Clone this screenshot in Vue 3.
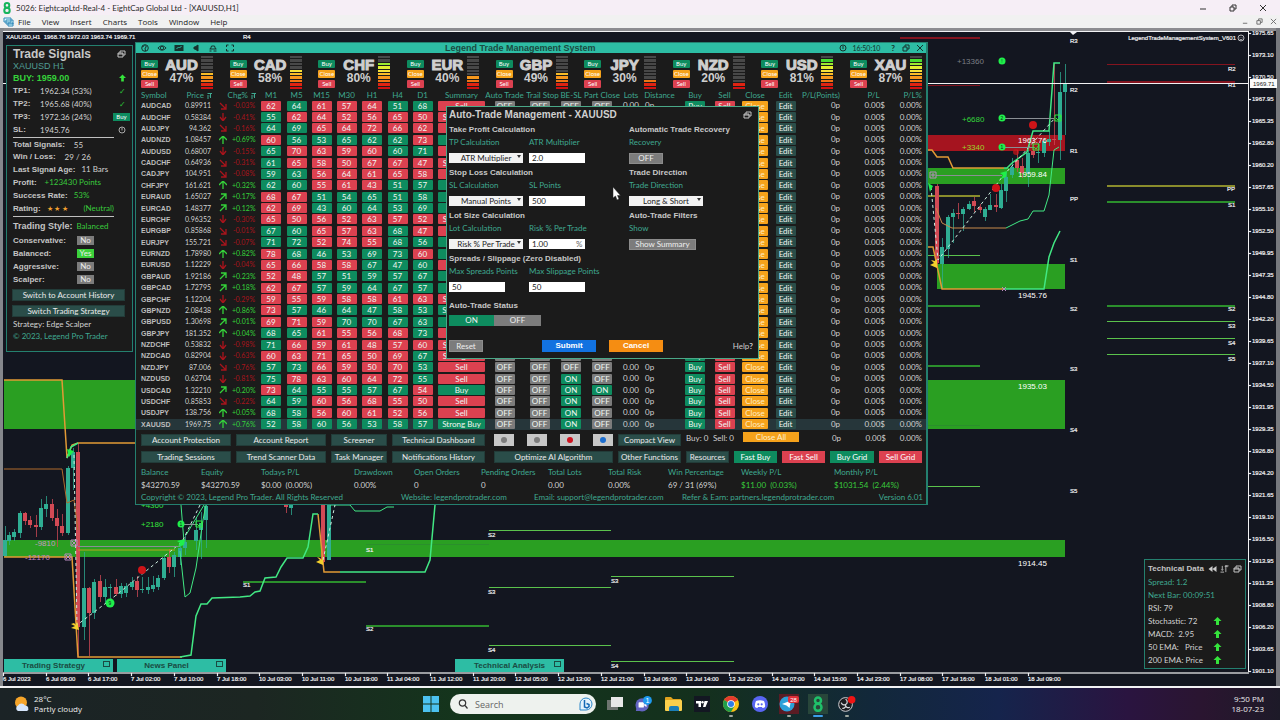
<script setup>
import { ref } from 'vue'

const menus = ['File', 'View', 'Insert', 'Charts', 'Tools', 'Window', 'Help']

const prices = ['1975.65', '1973.10', '1970.50', '1967.95', '1965.35', '1962.80', '1960.20', '1957.65', '1955.10', '1952.50',
  '1949.95', '1947.35', '1944.80', '1942.20', '1939.65', '1937.10', '1934.50', '1931.95', '1929.35', '1926.80',
  '1924.20', '1921.65', '1919.10', '1916.50', '1913.95', '1911.35', '1908.80', '1906.20', '1903.65', '1901.10']

const times = ['6 Jul 2023', '6 Jul 09:00', '6 Jul 17:00', '7 Jul 02:00', '7 Jul 10:00', '7 Jul 18:00', '10 Jul 03:00', '10 Jul 11:00',
  '10 Jul 19:00', '11 Jul 04:00', '11 Jul 12:00', '11 Jul 20:00', '12 Jul 05:00', '12 Jul 13:00', '12 Jul 21:00', '13 Jul 06:00',
  '13 Jul 14:00', '13 Jul 22:00', '14 Jul 07:00', '14 Jul 15:00', '14 Jul 23:00', '17 Jul 08:00', '17 Jul 16:00', '18 Jul 01:00', '18 Jul 09:00']

const zones = [
  { x: 4, y: 380, w: 132, h: 49, c: 'zg' }, { x: 4, y: 540, w: 1061, h: 17, c: 'zg' },
  { x: 928, y: 135, w: 137, h: 16, c: 'zr' }, { x: 928, y: 168, w: 137, h: 16, c: 'zg' },
  { x: 937, y: 264, w: 128, h: 25, c: 'zg' }, { x: 928, y: 380, w: 137, h: 49, c: 'zg' }
]

const levels = [
  [900, 980, 37, 'lr', 2], [900, 980, 85, 'lr', 1], [900, 980, 195, 'lo', 2], [900, 980, 255, 'll', 1], [900, 980, 305, 'lg', 2],
  [900, 980, 365, 'lg', 2], [900, 980, 486, 'll', 1], [900, 980, 425, 'lg', 1],
  [1107, 1235, 64, 'lr', 1], [1107, 1235, 81, 'lr', 2], [1107, 1235, 185, 'lo', 2], [1107, 1235, 201, 'lg', 2], [1107, 1235, 305, 'lg', 2],
  [1107, 1235, 321, 'll', 1], [1107, 1235, 338, 'll', 1], [1107, 1235, 354, 'll', 1],
  [243, 366, 581, 'lg', 2], [366, 489, 625, 'lg', 2], [366, 489, 544, 'lg', 1],
  [489, 611, 530, 'll', 1], [489, 611, 587, 'll', 1], [489, 611, 645, 'll', 1], [611, 734, 576, 'll', 1], [611, 734, 661, 'll', 1]
]

const marks = [
  ['R4', 243, 39], ['R3', 1070, 43], ['R2', 1070, 92], ['R1', 1070, 153], ['PP', 1070, 201], ['S1', 1070, 262], ['S2', 1070, 311],
  ['S3', 1070, 371], ['S4', 1070, 432], ['S5', 1070, 493],
  ['R2', 1228, 71], ['R1', 1228, 87], ['PP', 1227, 191], ['S1', 1228, 207], ['S2', 1228, 311], ['S3', 1228, 328], ['S4', 1228, 345], ['S5', 1228, 361],
  ['S1', 243, 587], ['S1', 366, 552], ['S2', 366, 631], ['S2', 488, 537], ['S3', 488, 594], ['S4', 488, 652], ['S3', 611, 583], ['S4', 611, 668]
]

// x, body top, body bottom, wick top, wick bottom, rising
const candles = [
  [5, 540, 556, 526, 557, 1], [9, 535, 541, 532, 545, 1], [14, 532, 537, 529, 541, 1], [20, 513, 533, 511, 538, 1], [25, 513, 521, 512, 525, 0],
  [30, 520, 525, 516, 528, 0], [36, 525, 527, 515, 537, 0], [41, 508, 527, 499, 530, 1], [46, 504, 509, 496, 517, 1], [52, 504, 518, 499, 521, 0],
  [57, 518, 526, 509, 547, 0], [62, 526, 533, 514, 536, 0], [68, 468, 533, 466, 535, 1], [73, 452, 468, 448, 490, 1], [78, 452, 627, 443, 657, 0],
  [84, 588, 627, 552, 640, 1], [89, 588, 613, 587, 656, 0], [94, 582, 613, 579, 619, 1], [100, 581, 597, 575, 602, 0], [105, 587, 597, 579, 604, 1],
  [110, 587, 588, 584, 599, 1], [116, 587, 594, 579, 596, 0], [121, 586, 594, 583, 598, 1], [126, 586, 593, 583, 597, 1], [132, 582, 587, 577, 590, 1],
  [137, 581, 590, 576, 597, 0], [142, 589, 590, 577, 593, 1], [148, 587, 590, 577, 594, 1], [153, 585, 589, 576, 592, 1], [158, 578, 587, 575, 590, 1],
  [164, 558, 578, 555, 580, 1], [169, 557, 567, 549, 573, 0], [174, 555, 567, 552, 577, 1], [180, 548, 557, 540, 565, 1], [185, 542, 548, 534, 555, 1],
  [196, 530, 541, 517, 550, 1], [201, 523, 530, 512, 559, 1], [206, 506, 520, 500, 548, 1],
  [286, 505, 507, 500, 513, 0], [291, 505, 508, 500, 515, 1], [323, 490, 562, 480, 566, 0], [329, 490, 560, 480, 560, 1],
  [937, 186, 263, 184, 265, 0], [942, 247, 264, 238, 289, 1], [948, 217, 249, 215, 258, 1], [953, 213, 217, 209, 243, 1], [958, 213, 214, 203, 219, 0],
  [963, 209, 214, 207, 231, 1], [969, 204, 209, 201, 210, 1], [974, 201, 206, 197, 212, 0], [980, 207, 210, 204, 213, 0], [985, 209, 217, 207, 221, 1],
  [990, 205, 210, 194, 210, 1], [996, 205, 207, 194, 212, 0], [1001, 190, 208, 184, 209, 1], [1006, 177, 191, 172, 202, 1], [1012, 167, 175, 158, 178, 1],
  [1017, 160, 168, 150, 172, 0], [1022, 166, 173, 158, 178, 0], [1028, 153, 173, 150, 187, 1], [1033, 151, 155, 137, 158, 0], [1038, 152, 153, 143, 163, 1],
  [1044, 141, 153, 138, 157, 1], [1049, 139, 142, 131, 146, 1], [1054, 139, 140, 63, 145, 0], [1060, 92, 140, 72, 160, 1], [1065, 83, 92, 64, 135, 1]
]

const currencies = [['AUD', 47, 5], ['CAD', 58, 6], ['CHF', 80, 8], ['EUR', 40, 4], ['GBP', 49, 5], ['JPY', 30, 3], ['NZD', 20, 2], ['USD', 81, 9], ['XAU', 87, 9]]

const heads = ['Symbol', 'Price', '', 'Chg%', 'M1', 'M5', 'M15', 'M30', 'H1', 'H4', 'D1', 'Summary', 'Auto Trade', 'Trail Stop', 'BE-SL',
  'Part Close', 'Lots', 'Distance', 'Buy', 'Sell', 'Close', 'Edit', 'P/L(Points)', 'P/L', 'P/L%']

const raw = `AUDCAD 0.89911 d -0.03 62r 64g 61r 57r 64r 51g 68g Sell 0000
AUDCHF 0.58384 D -0.41 55g 62r 64r 52r 56r 65r 50r Strong_Sell 0000
AUDJPY 94.362 d -0.16 64g 69g 65r 64r 72r 66r 62r Sell 0000
AUDNZD 1.08457 U +0.69 60r 56g 53g 65g 62g 62g 73r Buy 0000
AUDUSD 0.68007 D -0.15 65g 70r 63r 59r 60r 60g 71g Sell 0000
CADCHF 0.64936 d -0.31 61g 65r 58r 50r 67r 67r 47r Strong_Sell 0000
CADJPY 104.951 d -0.08 59g 63g 56r 64r 61r 65r 58r Sell 0000
CHFJPY 161.621 U +0.32 62g 60g 55r 61r 43r 51g 57g Buy 0000
EURAUD 1.65027 u +0.17 68r 67r 51g 54g 65g 51g 58g Buy 0000
EURCAD 1.48377 u +0.12 62r 69r 43g 60g 64g 53g 69g Buy 0000
EURCHF 0.96352 D -0.30 65r 50r 56r 52r 63r 57r 52r Strong_Sell 0000
EURGBP 0.85868 d -0.01 67g 60g 65r 57r 63r 68g 47r Sell 0000
EURJPY 155.721 d -0.07 71g 72g 52r 74r 55r 68g 56g Buy 0000
EURNZD 1.78980 U +0.82 78r 68g 46g 53g 69g 73g 60r Buy 0000
EURUSD 1.12229 D -0.04 65r 66r 58r 58r 67g 47g 60g Sell 0000
GBPAUD 1.92186 u +0.23 52r 48r 57g 51g 59g 57g 67g Buy 0000
GBPCAD 1.72795 u +0.18 62r 67r 57g 59g 64g 67g 57g Buy 0000
GBPCHF 1.12204 D -0.29 59r 55r 59r 58r 58r 61r 63r Strong_Sell 0000
GBPNZD 2.08438 U +0.86 73r 57g 46g 64g 47g 58g 53g Strong_Buy 0000
GBPUSD 1.30698 u +0.01 69r 71r 59r 70g 70g 67g 63g Buy 0000
GBPJPY 181.352 U +0.04 68g 65g 61r 55r 56r 68r 73g Sell 0000
NZDCHF 0.53832 D -0.98 71g 66r 59r 61r 48r 57r 60r Strong_Sell 0000
NZDCAD 0.82904 D -0.63 60r 63r 71r 65r 50r 69r 67g Strong_Sell 0000
NZDJPY 87.006 d -0.76 57g 73g 66r 59r 50r 70r 53g Sell 0000
NZDUSD 0.62704 D -0.81 75g 78r 63r 60r 64r 72r 55g Sell 0010
USDCAD 1.32210 u +0.20 73r 64g 55g 55g 57g 67g 54r Buy 0011
USDCHF 0.85853 d -0.22 64g 59g 60r 56r 68r 55r 50r Sell 0010
USDJPY 138.756 U +0.05 68g 58g 56r 60r 61r 52r 56r Sell 0010
XAUUSD 1969.75 U +0.76 52g 58g 60g 56g 53g 58g 57g Strong_Buy 0010`

const rows = raw.split('\n').map(line => {
  const p = line.split(' ')
  return {
    sym: p[0], price: p[1], dir: p[2], chg: p[3] + '%',
    tf: p.slice(4, 11).map(v => ({ n: v.slice(0, 2), c: v[2] })),
    sum: p[11].replace('_', ' '), tog: [...p[12]].map(Number)
  }
})
const arrows = {
  d: 'M1 1L7 7M7 2V7H2', D: 'M4 0V8M1 4L4 8L7 4', U: 'M4 8V0M0 4L4 0L8 4', u: 'M1 7L7 1M2 1H7V6'
}

const targets = [['TP1:', '1962.34 (53%)', '✓'], ['TP2:', '1965.68 (40%)', '✓'], ['TP3:', '1972.36 (24%)', 'Buy'], ['SL:', '1945.76', 'clock']]
const stats = [
  ['Balance', '$43270.59'], ['Equity', '$43270.59'], ['Todays P/L', '$0.00  (0.00%)'], ['Drawdown', '0.00%'], ['Open Orders', '0'],
  ['Pending Orders', '0'], ['Total Lots', '0.00'], ['Total Risk', '0.00%'], ['Win Percentage', '69 / 31 (69%)'], ['Weekly P/L', '$11.00  (0.03%)'], ['Monthly P/L', '$1031.54  (2.44%)']
]
const styles = [['Conservative:', 'No'], ['Balanced:', 'Yes'], ['Aggressive:', 'No'], ['Scalper:', 'No']]

const tpCalc = ref('ATR Multiplier')
const slCalc = ref('Manual Points')
const lotCalc = ref('Risk % Per Trade')
const direction = ref('Long & Short')
const atr = ref('2.0')
const slPts = ref('500')
const risk = ref('1.00')
const spread = ref('50')
const slip = ref('50')
</script>

<template>
  <div class="app">
    <header class="titlebar">
      <svg class="logo8" viewBox="0 0 10 12"><circle cx="5" cy="3.4" r="2.3" /><circle cx="5" cy="8.4" r="2.7" /></svg>
      <h1>5026: EightcapLtd-Real-4 - EightCap Global Ltd - [XAUUSD,H1]</h1>
      <div class="wctl">
        <button aria-label="Minimize"><svg viewBox="0 0 8 8"><path d="M1 5H7" /></svg></button>
        <button aria-label="Restore"><svg viewBox="0 0 8 8"><path d="M1 3H5V7H1ZM3 3V1H7V5H5" /></svg></button>
        <button aria-label="Close"><svg viewBox="0 0 8 8"><path d="M1 1L7 7M7 1L1 7" /></svg></button>
      </div>
    </header>
    <nav class="menubar">
      <svg class="mdi" viewBox="0 0 11 10"><path d="M1 1H8V5H1ZM3 3H10V7H3ZM5 6H10V9H5Z" /></svg>
      <button v-for="m in menus" :key="m">{{ m }}</button>
      <div class="wctl small">
        <button aria-label="Minimize chart"><svg viewBox="0 0 8 8"><path d="M1 6H6" /></svg></button>
        <button aria-label="Restore chart"><svg viewBox="0 0 8 8"><path d="M1 3H5V7H1ZM3 3V1H7V5H5" /></svg></button>
        <button aria-label="Close chart"><svg viewBox="0 0 8 8"><path d="M1 1L7 7M7 1L1 7" /></svg></button>
      </div>
    </nav>

    <main class="desk">
      <svg class="chart" viewBox="0 28 1280 660" preserveAspectRatio="xMinYMin meet">
        <rect x="0" y="28" width="1280" height="3" fill="#8c8c90" />
        <rect x="0" y="28" width="4" height="660" fill="#85878c" />
        <rect x="1276" y="28" width="4" height="660" fill="#77797e" />
        <rect x="3" y="31" width="1273" height="655" fill="#131620" />
        <rect v-for="(z, i) in zones" :key="'z' + i" :x="z.x" :y="z.y" :width="z.w" :height="z.h" :class="z.c" />
        <rect v-for="(l, i) in levels" :key="'l' + i" :x="l[0]" :y="l[2]" :width="l[1] - l[0]" :height="l[4]" :class="l[3]" />
        <g v-for="(c, i) in candles" :key="'c' + i" :class="c[5] ? 'up' : 'dn'">
          <rect :x="c[0]" :y="c[3]" width="1" :height="c[4] - c[3]" opacity=".75" />
          <rect :x="c[0] - 2" :y="c[1]" width="4" :height="c[2] - c[1]" />
        </g>
        <g fill="none" stroke="#e29a35" stroke-width="1.5">
          <path d="M4 380H62L67 458L72 445L78 443H136" />
          <path d="M4 469H62L67 503L74 500L78 530" stroke-width="1" stroke="#b06a2c" />
          <path d="M4 557H72L78 657H182" />
          <path d="M78 550H175" stroke="#b8a51e" stroke-width="1" />
          <path d="M318 514L324 572H340" />
          <path d="M928 150H932L937 157H948L953 168H1004" />
          <path d="M936 208L942 223L952 228H1006" stroke-width="1" stroke="#c98a4a" />
          <path d="M928 247H933L942 289H1004" />
        </g>
        <g fill="none" stroke="#42e884" stroke-width="1.5">
          <path d="M180 657L191 655L196 616L201 604H207L212 598L240 597L250 596L255 592L260 591L265 578L276 577L281 567L287 558H303L308 547L313 514H318" />
          <path d="M340 572H425L430 560L435 505" />
          <path d="M180 551L185 597L190 593L196 568L203 520L206 505M184 542L181 505M186 535L204 505" stroke-width="1" />
          <path d="M330 505H350L355 511H380L387 507H394" stroke-width="1" />
          <path d="M67 458L71 447L78 443" />
          <path d="M1004 168H1007L1012 163L1027 152L1033 131H1049L1054 63H1060" />
          <path d="M1006 228L1020 221L1028 219L1033 211H1044L1049 195L1054 150L1059 147" stroke-width="1" />
          <path d="M1004 289H1044L1049 257L1054 243L1060 231" />
        </g>
        <g fill="none" stroke="#cdeee0" stroke-width="1" stroke-dasharray="3 3">
          <path d="M74 455L77 625L110 600L182 542L200 505M323 560L335 505M931 187L938 260L1003 176L1055 118" />
        </g>
        <g stroke="#8a8f94" stroke-width="1"><path d="M1005 118.500H1054M1005 147.500H1035M936 175.500H1002M78 546.500H180M184 524.500H198" /></g>
        <g fill="#f4d02c">
          <path d="M79 630L71 628L75 626L71 624L74 623L76 625L77 621Z" /><path d="M323 565L316 562L320 560L317 557L320 558L322 560L323 556Z" />
          <path d="M937 268L930 265L934 263L931 260L935 261L937 259Z" />
        </g>
        <g fill="#1ff04a">
          <path d="M67 449L74 451L69 457Z" /><path d="M185 539L177 541L180 543L178 547L184 545Z" /><path d="M1007 171L1000 173L1003 175L1001 179L1006 177Z" /><path d="M928 183L933 186L930 192Z" />
          <circle cx="1002" cy="61" r="3.500" /><circle cx="1002" cy="118" r="3.500" /><circle cx="1002" cy="147" r="3.500" />
          <circle cx="181" cy="524" r="3.500" /><circle cx="110" cy="603" r="4.500" />
        </g>
        <g fill="#131620" font-size="5" text-anchor="middle" class="ar">
          <text x="1002" y="63">!</text><text x="1002" y="120">2</text><text x="1002" y="149">1</text><text x="181" y="526">1</text><text x="110" y="605">9</text>
        </g>
        <g fill="#cf1418"><circle cx="142" cy="570" r="4" /><circle cx="1033" cy="125" r="4" /><circle cx="996" cy="188" r="4" /><circle cx="1016" cy="152" r="3" opacity=".7" /></g>
        <g fill="none" stroke="#2cf03c"><path d="M1055 115H1061V121H1055ZM1056 118L1058 120L1061 116M1033 144H1039V150H1033ZM1034 147L1036 149L1039 145M196 521H202V527H196ZM197 524L199 526L202 522" /></g>
        <g fill="none" stroke="#b98ac0"><path d="M71 540H77V546H71ZM72 541L76 545M76 541L72 545M65 554H71V560H65ZM66 555L70 559M70 555L66 559M930 172H936V178H930ZM932 174H934V176H932ZM1002 287L1006 291M1006 287L1002 291" /></g>
        <g class="ar" font-size="8">
          <text x="957" y="64" fill="#7b7e84">+13360</text><text x="962" y="122" fill="#35d43c">+6680</text><text x="962" y="150" fill="#9ad42c">+3340</text>
          <text x="141" y="527" fill="#35e43c">+2180</text><text x="141" y="508" fill="#35e43c">+4360</text>
          <text x="35" y="546" fill="#c49ac0">-9810</text><text x="25" y="560" fill="#c884c0">-12170</text>
          <g fill="#ffffff"><text x="1018" y="143">1963.76</text><text x="1018" y="177">1959.84</text><text x="1018" y="298">1945.76</text><text x="1018" y="389">1935.03</text><text x="1018" y="566">1914.45</text></g>
        </g>
        <g class="ar axis" font-size="6"><text v-for="(m, i) in marks" :key="'m' + i" :x="m[1]" :y="m[2]">{{ m[0] }}</text></g>
        <g fill="#f2f2f4">
          <rect x="3" y="31" width="1245" height="1" /><rect x="1248" y="31" width="1" height="642" /><rect x="928" y="83" width="320" height="1" />
          <rect x="3" y="83" width="4" height="1" /><path d="M1070 32H1077L1073 35Z" />
          <rect x="0" y="686" width="1280" height="2" />
        </g>
        <rect x="3" y="672" width="1246" height="2" fill="#9a9ca0" />
        <g class="ar axis" font-size="6">
          <text x="6" y="39">XAUUSD,H1&nbsp; 1968.76 1972.03 1963.74 1969.71</text>
          <g v-for="(p, i) in prices" :key="p"><text x="1252" :y="35 + i * 22">{{ p }}</text><rect x="1249" :y="33 + i * 22" width="2" height="1" /></g>
          <g v-for="(t, i) in times" :key="t"><text :x="3 + Math.round(i * 42.7)" y="681">{{ t }}</text><rect :x="3 + Math.round(i * 42.7)" y="673" width="1" height="3" /></g>
          <text x="1236" y="40" text-anchor="end">LegendTradeManagementSystem_V601</text>
        </g>
        <g fill="none" stroke="#dcdce0" stroke-width=".8"><circle cx="1241" cy="38" r="3" /><path d="M1239.500 39Q1241 41 1242.500 39M1240 37V37.500M1242 37V37.500" /></g>
        <rect x="1250" y="79" width="27" height="9" fill="#fafafa" /><text class="ar" x="1253" y="86" font-size="6" fill="#222">1969.71</text>
      </svg>

      <section class="panel signals">
        <div class="hd"><h2>Trade Signals</h2><button aria-label="Restore" class="ic"><svg viewBox="0 0 9 8"><path d="M1 3H6V7H1ZM3 3V1H8V5H6M1 4H6" /></svg></button></div>
        <div class="sym">XAUUSD H1</div>
        <div class="buy"><span>BUY: 1959.00</span><svg viewBox="0 0 8 8"><path d="M4 0L8 4H5.500V8H2.500V4H0Z" /></svg></div>
        <div v-for="t in targets" :key="t[0]" class="tp">
          <b>{{ t[0] }}</b><span>{{ t[1] }}</span>
          <button v-if="t[2] === 'Buy'" class="mini g">Buy</button>
          <svg v-else-if="t[2] === 'clock'" class="clk" viewBox="0 0 8 8"><circle cx="4" cy="4" r="3" /><path d="M4 1.500V4.500" /></svg>
          <i v-else>{{ t[2] }}</i>
        </div>
        <hr>
        <div class="ln a"><b>Total Signals:</b><span class="x3">55</span></div>
        <div class="ln a"><b>Win / Loss:</b><span class="x3">29 / 26</span></div>
        <div class="ln"><b>Last Signal Age:</b><span>11 Bars</span></div>
        <div class="ln"><b>Profit:</b><span class="gr x2">+123430 Points</span></div>
        <div class="ln"><b>Success Rate:</b><span class="gr">53%</span></div>
        <div class="ln"><b>Rating:</b><span class="st">★ ★ ★</span><span class="gr neu">(Neutral)</span></div>
        <hr>
        <div class="ln big"><b>Trading Style:</b><span class="gr">Balanced</span></div>
        <div v-for="s in styles" :key="s[0]" class="ln sty"><b>{{ s[0] }}</b><button :class="{ yes: s[1] === 'Yes' }">{{ s[1] }}</button></div>
        <div class="switches">
          <button class="tb">Switch to Account History</button>
          <button class="tb">Switch Trading Strategy</button>
        </div>
        <div class="ln a">Strategy: Edge Scalper</div>
        <div class="ln teal">© 2023, Legend Pro Trader</div>
      </section>

      <section class="panel manager">
        <div class="mbar">
          <div class="mic">
            <svg viewBox="0 0 9 8"><circle cx="4.500" cy="4" r="3.300" /><path d="M4 1L6 3L4.500 4L5 7M1.500 3L3.500 2" /></svg>
            <svg viewBox="0 0 11 8"><path d="M1 4Q5.500 -1 10 4Q5.500 9 1 4Z" /><circle cx="5.500" cy="4" r="1.800" /></svg>
            <svg viewBox="0 0 9 8"><rect x="0" y="1" width="9" height="6" fill="#17322e" stroke="none" /><path d="M2 5L4 3L5 4L7 2" stroke="#2dbda4" /></svg>
            <svg viewBox="0 0 8 8"><path d="M2 3H3L6 1V7L3 5H2Z" fill="#17322e" /></svg>
            <svg viewBox="0 0 9 8"><path d="M2 5L3 2H6L7 5M1 7H3M5 7H8M1 5H8" /></svg>
            <svg viewBox="0 0 9 8"><path d="M1 3V1H3M6 1H8V3M8 5V7H6M3 7H1V5" /></svg>
          </div>
          <h2>Legend Trade Management System</h2>
          <div class="mright">
            <svg viewBox="0 0 8 8"><circle cx="4" cy="4" r="3" /><path d="M4 2V5" /></svg><span>16:50:10</span><b>?</b>
            <svg viewBox="0 0 8 8"><path d="M1 3H5V7H1ZM3 3V1H7V5H5" /></svg><svg viewBox="0 0 8 8"><path d="M1 1L7 7M7 1L1 7" /></svg>
          </div>
        </div>
        <div class="curs">
          <div v-for="c in currencies" :key="c[0]" class="cur">
            <div class="stk"><button class="g">Buy</button><button class="o">Close</button><button class="r">Sell</button></div>
            <div class="nm"><strong>{{ c[0] }}</strong><span>{{ c[1] }}%</span></div>
            <div class="meter"><i v-for="n in 10" :key="n" :class="10 - n < c[2] ? 'k' + (11 - n) : ''"></i></div>
          </div>
        </div>
        <table>
          <colgroup><col v-for="(h, i) in heads" :key="i" :class="'w' + i"></colgroup>
          <thead><tr><th v-for="(h, i) in heads" :key="i" :class="'h' + i"><span>{{ h }}<svg v-if="i === 1 || i === 3" viewBox="0 0 6 7"><path d="M1 6H3M1 4H3.500M1.500 1.500H6M4.500 1.500V6" /></svg></span></th></tr></thead>
          <tbody>
            <tr v-for="r in rows" :key="r.sym" :class="{ sel: r.sym === 'XAUUSD' }">
              <td class="s">{{ r.sym }}</td>
              <td class="n p">{{ r.price }}</td>
              <td :class="r.chg[0] === '+' ? 'pos' : 'neg'"><svg viewBox="0 0 8 8"><path :d="arrows[r.dir]" /></svg></td>
              <td class="n ch" :class="r.chg[0] === '+' ? 'pos' : 'neg'">{{ r.chg }}</td>
              <td v-for="(t, i) in r.tf" :key="i"><span class="c" :class="t.c">{{ t.n }}</span></td>
              <td><span class="c wide" :class="r.sum.includes('Buy') ? 'g' : 'r'">{{ r.sum }}</span></td>
              <td v-for="(t, i) in r.tog" :key="'t' + i"><button class="c" :class="t ? 'g' : 'off'">{{ t ? 'ON' : 'OFF' }}</button></td>
              <td>0.00</td><td class="l">0p</td>
              <td><button class="c g">Buy</button></td><td><button class="c r">Sell</button></td>
              <td><button class="c cl o">Close</button></td><td><button class="c ed">Edit</button></td>
              <td class="n q">0p</td><td class="n q2">0.00$</td><td class="n q">0.00%</td>
            </tr>
          </tbody>
        </table>
        <div class="acts">
          <button class="tb">Account Protection</button><button class="tb">Account Report</button><button class="tb">Screener</button><button class="tb td">Technical Dashboard</button>
          <div class="dots"><button aria-label="Auto trade"><i></i></button><button aria-label="Trail stop"><i></i></button><button aria-label="Break even"><i class="red"></i></button><button aria-label="Part close"><i class="blu"></i></button></div>
          <button class="tb">Compact View</button>
          <div class="tot"><span>Buy: 0</span><span>Sell: 0</span><button class="o">Close All</button><span class="t1">0p</span><span class="t2">0.00$</span><span class="t3">0.00%</span></div>
        </div>
        <div class="acts">
          <button class="tb">Trading Sessions</button><button class="tb">Trend Scanner Data</button><button class="tb">Task Manager</button><button class="tb td">Notifications History</button>
          <button class="tb">Optimize AI Algorithm</button><button class="tb">Other Functions</button>
          <div class="fast"><button class="tb">Resources</button><button class="g">Fast Buy</button><button class="r">Fast Sell</button><button class="g">Buy Grid</button><button class="r">Sell Grid</button></div>
        </div>
        <dl class="stats"><div v-for="(s, i) in stats" :key="s[0]"><dt>{{ s[0] }}</dt><dd :class="{ gr: i > 8 }">{{ s[1] }}</dd></div></dl>
        <footer class="foot"><span>Copyright © 2023, Legend Pro Trader. All Rights Reserved</span><span>Website: legendprotrader.com</span><span>Email: support@legendprotrader.com</span><span>Refer &amp; Earn: partners.legendprotrader.com</span><span>Version 6.01</span></footer>
      </section>

      <form class="modal" @submit.prevent>
        <div class="mh"><h2>Auto-Trade Management - XAUUSD</h2><button type="button" class="ic" aria-label="Restore"><svg viewBox="0 0 9 8"><path d="M1 3H6V7H1ZM3 3V1H8V5H6M1 4H6" /></svg></button></div>
        <div class="cols">
          <div class="left">
            <fieldset>
              <legend>Take Profit Calculation</legend>
              <label for="tp">TP Calculation</label><label for="atr">ATR Multiplier</label>
              <span class="dd"><select id="tp" v-model="tpCalc"><option>ATR Multiplier</option></select></span><input id="atr" v-model="atr">
            </fieldset>
            <fieldset>
              <legend>Stop Loss Calculation</legend>
              <label for="sl">SL Calculation</label><label for="slp">SL Points</label>
              <span class="dd"><select id="sl" v-model="slCalc"><option>Manual Points</option></select></span><input id="slp" v-model="slPts">
            </fieldset>
            <fieldset>
              <legend>Lot Size Calculation</legend>
              <label for="lot">Lot Calculation</label><label for="risk">Risk % Per Trade</label>
              <span class="dd"><select id="lot" v-model="lotCalc"><option>Risk % Per Trade</option></select></span><span class="pct"><input id="risk" v-model="risk"><em>%</em></span>
            </fieldset>
            <fieldset>
              <legend>Spreads / Slippage (Zero Disabled)</legend>
              <label for="spr">Max Spreads Points</label><label for="slp2">Max Slippage Points</label>
              <input id="spr" v-model="spread"><input id="slp2" v-model="slip">
            </fieldset>
          </div>
          <div class="right">
            <fieldset><legend>Automatic Trade Recovery</legend><label for="rec">Recovery</label><button id="rec" type="button" class="gb w33">OFF</button></fieldset>
            <fieldset><legend>Trade Direction</legend><label for="dir">Trade Direction</label><span class="dd"><select id="dir" v-model="direction"><option>Long &amp; Short</option></select></span></fieldset>
            <fieldset><legend>Auto-Trade Filters</legend><label for="show">Show</label><button id="show" type="button" class="gb w67">Show Summary</button></fieldset>
          </div>
        </div>
        <h3>Auto-Trade Status</h3>
        <div class="tgl"><button type="button" class="g">ON</button><button type="button">OFF</button></div>
        <div class="mf"><button type="button" class="gb w33">Reset</button><button class="sub">Submit</button><button type="button" class="can">Cancel</button><a href="#">Help<b>?</b></a></div>
      </form>

      <section class="panel tech">
        <div class="hd"><h2>Technical Data</h2>
          <svg viewBox="0 0 8 8"><path d="M4 1V7L0 4ZM8 1V7L4 4Z" fill="#ccc" stroke="none" /></svg>
          <svg viewBox="0 0 9 9"><path d="M2 1V6M1 5L2 6L3 5M0 8H4M6 8V1M5 2L6 1L8 2M5 1H9" /></svg>
          <svg viewBox="0 0 9 8"><path d="M1 3H6V7H1ZM3 3V1H8V5H6M1 4H6" /></svg></div>
        <p class="teal">Spread: 1.2</p><p class="teal">Next Bar: 00:09:51</p><p>RSI: 79</p>
        <p v-for="t in ['Stochastic: 72', 'MACD:  2.95', '50 EMA:   Price', '200 EMA: Price']" :key="t"><span>{{ t }}</span><svg viewBox="0 0 8 8"><path d="M4 0L8 4H5.500V8H2.500V4H0Z" fill="#35e43c" stroke="none" /></svg></p>
      </section>

      <button class="tab t-a"><span>Trading Strategy</span><i></i></button>
      <button class="tab t-b"><span>News Panel</span><i></i></button>
      <button class="tab t-c"><span>Technical Analysis</span><i></i></button>
      <svg class="cursor" viewBox="0 0 9 13"><path d="M1 0V11L3.500 9L5 13L7 12L5.500 8.500H8.500Z" fill="#fff" stroke="#222" stroke-width=".5" /></svg>
    </main>

    <footer class="taskbar">
      <div class="weather">
        <svg viewBox="0 0 16 16"><circle cx="7" cy="6.500" r="6" fill="#f6a52a" /><path d="M4 15A3 3 0 0 1 4 9.500A4 4 0 0 1 11 9.500A3 3 0 0 1 13 15Z" fill="#d6e6fb" /></svg>
        <div><span>28°C</span><span>Partly cloudy</span></div>
      </div>
      <div class="dock">
        <button aria-label="Start"><svg viewBox="0 0 16 16"><path d="M0 0H7.500V7.500H0ZM8.500 0H16V7.500H8.500ZM0 8.500H7.500V16H0ZM8.500 8.500H16V16H8.500Z" fill="#4cc2f0" /></svg></button>
        <label class="search"><svg viewBox="0 0 10 10"><circle cx="4.500" cy="4" r="3.200" /><path d="M7 6.500L9.500 9.500" /></svg><input placeholder="Search" aria-label="Search">
          <svg class="bing" viewBox="0 0 14 14"><path d="M1 13V7A6 6 0 1 1 7 13Z" fill="#e3f2fc" stroke="#2b86c8" /><path d="M5.500 3V10L8 11L10 9.500V7.500L7.500 6.500" stroke="#1268b4" stroke-width="1.500" /></svg></label>
        <button aria-label="Task view"><svg viewBox="0 0 16 16"><rect x="0" y="4" width="11" height="10" fill="#6e7470" /><rect x="4" y="1" width="12" height="10" fill="#e8e8e8" /></svg></button>
        <button aria-label="Chat"><svg viewBox="0 0 20 18"><circle cx="8" cy="10" r="7.500" fill="#6264c0" /><path d="M1 17L2 11L7 17Z" fill="#6264c0" /><rect x="4" y="7" width="6" height="6" rx="1" fill="#fff" /><path d="M10.500 9L13 7.500V12.500L10.500 11Z" fill="#fff" /><circle cx="14" cy="5" r="5" fill="#1e9af0" /><text x="14" y="8" font-size="8" text-anchor="middle" fill="#fff" class="ar">1</text></svg></button>
        <button aria-label="Files"><svg viewBox="0 0 17 16"><path d="M0 2Q0 1 1 1H6L8 3H16V6H0Z" fill="#e0a21e" /><rect x="0" y="4" width="17" height="11" rx="1" fill="#fbd04c" /><path d="M4 15V12Q4 10 6 10H12Q14 10 14 12V15Z" fill="#1b7fb8" /></svg></button>
        <button aria-label="Trading view"><svg viewBox="0 0 16 16"><rect width="16" height="16" fill="#131722" /><path d="M2 5H7V11H4.500V7.500H2ZM10.500 5H14L11.500 11H9Z" fill="#fff" /><circle cx="8.500" cy="6.200" r="1.200" fill="#fff" /></svg></button>
        <button aria-label="Browser" class="run"><svg viewBox="0 0 16 16"><circle cx="8" cy="8" r="8" fill="#fbc116" /><path d="M8 8L1.100 4A8 8 0 0 1 14.900 4Z" fill="#e33b2e" /><path d="M8 8L1.100 4A8 8 0 0 0 8 16L11.500 10Z" fill="#219d4b" /><circle cx="8" cy="8" r="3.800" fill="#fff" /><circle cx="8" cy="8" r="3" fill="#2f7de9" /></svg></button>
        <button aria-label="Discord"><svg viewBox="0 0 16 16"><circle cx="8" cy="8" r="8" fill="#5865f2" /><path d="M4 5Q8 3.500 12 5Q13.500 8 13 11Q12 12 10.500 12L10 11H6L5.500 12Q4 12 3 11Q2.500 8 4 5Z" fill="#fff" /><circle cx="6.300" cy="8.300" r="1.100" fill="#5865f2" /><circle cx="9.700" cy="8.300" r="1.100" fill="#5865f2" /></svg></button>
        <button aria-label="Telegram" class="run box red"><svg viewBox="0 0 20 16"><circle cx="8" cy="8" r="7.500" fill="#2ca0d8" /><path d="M3 8L12 4.500L10.500 12L7.500 9.500Z" fill="#fff" /><rect x="9" y="0" width="11" height="7" rx="2" fill="#e0303a" /><text x="14.500" y="6" font-size="6" text-anchor="middle" fill="#fff" class="ar">28</text></svg></button>
        <button aria-label="Trading terminal" class="run box blue"><svg viewBox="0 0 16 16"><circle cx="8" cy="4.500" r="3" fill="none" stroke="#1fc06a" stroke-width="2.500" /><circle cx="8" cy="11.300" r="3.500" fill="none" stroke="#1fc06a" stroke-width="2.500" /></svg></button>
        <button aria-label="Recorder" class="run"><svg viewBox="0 0 20 17"><circle cx="8" cy="9" r="7.300" fill="#1c1c20" stroke="#d8d8dc" /><path d="M8 3.500A3 3 0 0 1 8 9A3 3 0 0 0 12.500 12M8 9A3 3 0 0 1 3.500 7M8 9A3 3 0 0 1 4.500 13" fill="none" stroke="#d8d8dc" stroke-width="1.300" /><circle cx="14.500" cy="4" r="4" fill="#f01414" /></svg></button>
      </div>
      <div class="clock"><span>9:50 PM</span><span>18-07-23</span></div>
    </footer>
  </div>
</template>

<style>
html, body { margin: 0; background: #131620; }
</style>

<style scoped>
* { box-sizing: border-box; }
.app { min-height: 100vh; display: flex; flex-direction: column; font: 8px/10px Lato, "Open Sans", sans-serif; color: #d2d2d2; overflow: hidden; }
button, input, select { font: inherit; color: inherit; border: 0; padding: 0; margin: 0; background: none; }
h1, h2, h3, p, dl, dd, fieldset { margin: 0; padding: 0; border: 0; font-weight: inherit; font-size: inherit; }
button { white-space: nowrap; }
.ar { font-family: "Liberation Sans", Arial, sans-serif; }
.axis { fill: #f0f0f2; stroke: #f0f0f2; stroke-width: .2; }
svg { flex: none; }

.titlebar { height: 15px; background: #f6eef6; display: flex; align-items: center; padding: 0 13px 0 2px; color: #2a2a2a; font: 8px/12px "Noto Sans", "Open Sans", sans-serif; }
.titlebar h1 { font: 8px/12px Lato, sans-serif; }
.logo8 { width: 10px; height: 12px; margin-right: 4px; fill: none; stroke: #16b45c; stroke-width: 2; }
.wctl { margin-left: auto; display: flex; gap: 22px; }
.wctl button { width: 8px; height: 8px; display: flex; }
.wctl svg { width: 8px; height: 8px; fill: none; stroke: #333; stroke-width: 1; }
.wctl.small { gap: 6px; margin-right: -6px; }
.wctl.small svg { width: 7px; height: 7px; stroke: #666; }
.menubar { height: 13px; background: #f1f1f1; display: flex; align-items: center; padding: 0 8px 0 3px; gap: 11px; color: #222; font: 8px/12px "Open Sans", sans-serif; }
.mdi { width: 11px; height: 10px; margin-right: -7px; fill: #dff; stroke: #2f86b8; stroke-width: 1; }

.desk { flex: 1; position: relative; min-height: 660px; }
.chart { display: block; width: 100%; }
.zg { fill: #2a9f22; } .zr { fill: #a5141f; }
.lr { fill: #84141f; } .lo { fill: #8a8c2c; } .lg { fill: #2b8f2c; } .ll { fill: #5bc24c; }
.up { fill: #2fae93; } .dn { fill: #d24a55; }

.panel { position: absolute; background: #1b1b1b; border: 1px solid #24806f; }
.g { background: #0e8c5f; } .r { background: #dc4150; } .o { background: #f5a21b; }
.gr { color: #39c93c !important; } .teal { color: #3fa890; }
.ic { display: flex; }
.ic svg, .tech svg { width: 9px; height: 8px; fill: none; stroke: #c4c4c4; stroke-width: 1; }
.tb { background: #2a4d49; color: #eaeaea; height: 12px; text-align: center; border: 1px solid #223c39; line-height: 10px; }

.signals { left: 6px; top: 17px; width: 127px; height: 307px; padding: 0 6px; font-size: 8px; }
.signals b { font: bold 8px/12px "Liberation Sans", Arial, sans-serif; color: #c4c4c4; }
.hd { display: flex; justify-content: space-between; align-items: center; }
.signals .hd { height: 15px; }
.signals h2 { font: bold 12px/14px "Liberation Sans", Arial, sans-serif; color: #c8c8c8; }
.sym { font: 9px/11px "Liberation Sans", Arial, sans-serif; color: #4f9c94; }
.buy { font: bold 9px/12px "Liberation Sans", Arial, sans-serif; color: #35d23a; display: flex; justify-content: space-between; }
.buy svg { width: 7px; height: 8px; fill: #35e43c; align-self: center; }
.tp { display: flex; align-items: center; height: 13px; }
.tp b { width: 27px; } .tp span { flex: 1; }
.tp i { color: #2cc238; font-style: normal; }
.clk { width: 8px; height: 8px; fill: none; stroke: #aaa; }
.mini { width: 17px; height: 8px; font-size: 6px; line-height: 8px; color: #fff; margin-right: -4px; }
hr { width: 101px; margin: 1px 0; border: 0; border-top: 1px solid #c0c0c0; }
.ln { display: flex; gap: 6px; height: 13px; line-height: 13px; align-items: center; }
.ln.a { height: 12px; }
.x3 { margin-left: 3px; } .x2 { margin-left: 2px; }
.st { color: #f0a030; font-size: 7px; } .neu { margin-left: auto; margin-right: 12px; }
.ln.big b { font-size: 9px; } .ln.big { height: 16px; gap: 4px; }
.ln.sty b { width: 58px; }
.sty button { width: 17px; height: 9px; line-height: 9px; background: #7c7c7c; color: #eee; }
.sty button.yes { background: #3bd13b; }
.switches { display: grid; row-gap: 4px; width: 113px; margin: 3px 0 1px -1px; }

.manager { left: 135px; top: 14px; width: 793px; height: 463px; border-right-width: 2px; }
.mbar { height: 10px; background: #2dbda4; color: #14312c; display: flex; align-items: center; padding: 0 1px 0 4px; }
.mbar svg { height: 8px; width: 10px; fill: none; stroke: #17322e; stroke-width: 1; }
.mic { display: flex; gap: 7px; width: 305px; }
.mbar h2 { font: bold 9px/10px "Liberation Sans", Arial, sans-serif; color: #1a4b42; }
.mright { margin-left: auto; display: flex; gap: 4px; align-items: center; }
.mright b { margin: 0 2px 0 7px; }
.mright span { font-size: 7px; }
.curs { display: flex; justify-content: space-between; padding: 3px 4px 0 5px; height: 38px; }
.cur { width: 72px; display: flex; }
.stk { width: 17px; display: flex; flex-direction: column; gap: 2px; padding-top: 4px; }
.stk button { height: 8px; font-size: 6px; line-height: 8px; color: #fff; border-radius: 1px; }
.nm { flex: 1; display: flex; flex-direction: column; align-items: center; padding: 2px 0 0 4px; font: bold 12px/13px "Liberation Sans", Arial, sans-serif; color: #cfcfcf; }
.nm strong { font-size: 15px; line-height: 14px; -webkit-text-stroke: 1px #cfcfcf; }
.meter { width: 12px; height: 33px; display: grid; grid-template-rows: repeat(10, 1fr); row-gap: 1px; }
.meter i { background: #484848; }
.meter .k1 { background: #d01212; } .meter .k2 { background: #e02412; } .meter .k3 { background: #ee7414; } .meter .k4 { background: #f7981c; }
.meter .k5 { background: #f9bd28; } .meter .k6 { background: #f6e23a; } .meter .k7 { background: #e2ee30; } .meter .k8 { background: #9cea30; } .meter .k9 { background: #4ade30; } .meter .k10 { background: #2ad030; }

table { width: 100%; height: 339px; table-layout: fixed; border-collapse: collapse; }
th, td { padding: 0; text-align: center; white-space: nowrap; font-weight: normal; line-height: 9px; }
th { height: 9px; color: #3fa890; overflow: visible; }
th span { display: flex; justify-content: center; gap: 2px; }
th svg { width: 6px; height: 7px; fill: none; stroke: #3fa890; stroke-width: 1; align-self: center; }
.h0 span { justify-content: flex-start; padding-left: 5px; }
.h1 span, .h3 span { justify-content: flex-end; padding-right: 2px; } .h13 span { padding-left: 6px; } .h23 span { padding-left: 16px; } .h24 span, .h22 span { justify-content: flex-end; padding-right: 4px; }
.w0 { width: 48px; } .w1 { width: 30px; } .w2 { width: 18px; } .w3 { width: 26px; } .w4, .w8 { width: 26px; }
.w5, .w6, .w7, .w9, .w10 { width: 25px; } .w11 { width: 53px; } .w12 { width: 33px; } .w13 { width: 37px; } .w14 { width: 26px; }
.w15 { width: 36px; } .w16 { width: 22px; } .w17 { width: 35px; } .w18 { width: 36px; } .w19 { width: 23px; } .w20 { width: 38px; }
.w21 { width: 23px; } .w22 { width: 47px; } .w23 { width: 43px; }
td svg { width: 8px; height: 8px; display: block; margin: 0 auto; fill: none; stroke: currentColor; stroke-width: 1.3; }
td.s { text-align: left; padding-left: 5px; font: bold 7px/9px "Liberation Sans", Arial, sans-serif; color: #bdbdbd; }
td.n { text-align: right; } td.p, td.ch { font-size: 7px; } td.p { padding-right: 3px; } td.ch { padding-right: 3px; } td.q { padding-right: 4px; } td.q2 { padding-right: 2px; } td.l { text-align: left; padding-left: 3px; }
td.pos { color: #35d23a; } td.neg { color: #a8141c; }
.c { display: block; width: 20px; height: 10px; line-height: 10px; margin: 0 auto; color: #f0f6f2; border-radius: 1px; text-align: center; }
.c.wide { width: 47px; } .c.cl { width: 26px; color: #fdedc8; } .c.off { background: #7c7c7c; } .c.ed { background: #2a4d49; }
tr.sel { background: #26363a; }

.acts { display: grid; grid-template-columns: 90px 90px 56px 97px 119px 63px 1fr; column-gap: 5px; padding: 4px 5px 0; height: 17px; white-space: nowrap; }
.acts .td { margin-right: 4px; }
.dots { display: grid; grid-template-columns: 20px 20px 20px 20px; justify-content: space-between; }
.dots button { background: #c8c8c8; height: 12px; display: flex; align-items: center; justify-content: center; }
.dots i { width: 6px; height: 6px; border-radius: 50%; background: #7e7e7e; } .dots .red { background: #d01420; } .dots .blu { background: #1c6ed0; }
.tot { display: grid; grid-template-columns: 27px 30px 56px 42px 45px 36px; line-height: 8px; }
.tot button { height: 10px; line-height: 10px; margin-top: -2px; color: #fdf0cc; }
.t1, .t2, .t3 { text-align: right; }
.fast { display: grid; grid-template-columns: 43px 43px 43px 44px 43px; column-gap: 5px; color: #fff; }
.fast button { height: 12px; line-height: 10px; }
.stats { display: grid; grid-template-columns: 60px 60px 93px 60px 67px 67px 60px 60px 73px 93px 1fr; padding: 2px 0 0 5px; white-space: pre; }
.stats dt { color: #3fa890; line-height: 12px; } .stats dd { line-height: 15px; }
.foot { display: grid; grid-template-columns: 260px 133px 148px 1fr auto; padding: 0 3px 0 5px; line-height: 9px; color: #3fa890; }

.modal { position: absolute; left: 446px; top: 78px; width: 313px; height: 253px; background: #1b1b1b; border: 1px solid #4aa888; padding: 0 2px; }
.mh { display: flex; justify-content: space-between; align-items: center; height: 16px; padding-right: 4px; }
.mh h2 { font: bold 10px/14px "Liberation Sans", Arial, sans-serif; color: #cfcfcf; }
.cols { display: grid; grid-template-columns: 180px 1fr; }
fieldset { display: grid; grid-template-columns: 80px 80px; grid-template-rows: 13px 11px 11px; min-width: 0; height: 43px; }
.right fieldset { grid-template-columns: 1fr; justify-items: start; }
legend, h3 { grid-column: 1 / -1; padding: 0; font: bold 8px/13px "Liberation Sans", Arial, sans-serif; color: #c8c8c8; }
fieldset label { color: #3fa890; line-height: 13px; white-space: nowrap; }
.dd { position: relative; width: 74px; height: 10px; margin-top: 4px; }
.dd::after { content: ""; position: absolute; right: 2px; top: 2px; border: 2px solid transparent; border-top: 3px solid #333; }
select { appearance: none; width: 74px; height: 10px; background: #f2f2f2; color: #222; text-align-last: center; display: block; }
input { width: 56px; height: 10px; background: #fff; color: #222; padding-left: 3px; display: block; }
fieldset > input, .pct, .right .gb { margin-top: 4px; }
.pct { position: relative; } .pct em { position: absolute; left: 47px; top: 0; color: #666; font-style: normal; }
.gb { background: #7c7c7c; color: #eee; height: 11px; border: 1px solid #8c8c8c; line-height: 9px; }
.w33 { width: 34px; } .w67 { width: 67px; }
.modal h3 { margin-top: 5px; line-height: 12px; }
.tgl { display: flex; height: 11px; margin-top: 3px; }
.tgl button { width: 45px; background: #7c7c7c; color: #eee; line-height: 11px; } .tgl .g { background: #0e8c5f; } .tgl button + button { width: 47px; }
.mf { display: flex; align-items: center; margin-top: 14px; }
.mf button { height: 12px; }
.sub, .can { width: 54px; background: #1272e0; color: #fff; font: bold 8px/12px "Liberation Sans", Arial, sans-serif !important; margin-left: 59px; }
.can { background: #f58d12; margin-left: 13px; }
.mf a { margin-left: auto; padding-right: 3px; color: #ccc; text-decoration: none; }

.tech { left: 1144px; top: 531px; width: 102px; height: 110px; padding: 2px 3px; }
.tech .hd { height: 13px; } .tech h2 { font: bold 8px/12px "Liberation Sans", Arial, sans-serif; color: #c4c4c4; }
.tech p { display: flex; justify-content: space-between; align-items: center; height: 13px; white-space: pre; padding-right: 20px; }

.tab { position: absolute; top: 631px; height: 13px; width: 109px; background: #2dbda4; color: #1a4b42; font: bold 8px/13px "Liberation Sans", Arial, sans-serif; padding-right: 10px; }
.tab i { position: absolute; right: 3px; top: 2px; width: 7px; height: 6px; border: 1px solid #1a4b42; }
.t-a { left: 4px; } .t-b { left: 117px; } .t-c { left: 455px; padding-right: 0; }
.cursor { position: absolute; left: 612px; top: 159px; width: 9px; height: 13px; }

.taskbar { height: 32px; display: grid; grid-template-columns: 1fr auto 1fr; align-items: center; padding: 0 16px 0 14px; background: linear-gradient(90deg, #1b2326 0%, #1c2622 20%, #14351c 36%, #14301d 55%, #12283a 68%, #15244c 78%, #2a1440 88%, #2a1530 94%, #1d1a28 100%); color: #eee; font: 8px/10px "Open Sans", sans-serif; }
.weather { display: flex; align-items: center; gap: 4px; }
.weather svg { width: 16px; height: 16px; } .weather span, .clock span { display: block; }
.clock { text-align: right; }
.dock { display: flex; align-items: center; gap: 9px; }
.dock button { position: relative; width: 20px; height: 20px; display: flex; align-items: center; justify-content: center; }
.dock svg { height: 16px; }
.search { width: 146px; height: 20px; border-radius: 10px; background: #eef2ee; display: flex; align-items: center; padding: 0 3px 0 8px; gap: 7px; }
.search svg { width: 10px; height: 10px; fill: none; stroke: #333; stroke-width: 1.200; } .search svg.bing { width: 14px; height: 14px; stroke-width: 1; }
.search input { flex: 1; min-width: 0; background: none; font-size: 9px; padding: 0; height: 16px; } .search input::placeholder { color: #666; }
.run::after { content: ""; position: absolute; bottom: -3px; left: 8px; width: 4px; height: 2px; border-radius: 1px; background: #a0a8a0; }
.box.red { background: #5a1c24; } .box.blue { background: #28463a; } .box.blue::after { width: 10px; left: 5px; background: #3c9ee8; }
</style>
